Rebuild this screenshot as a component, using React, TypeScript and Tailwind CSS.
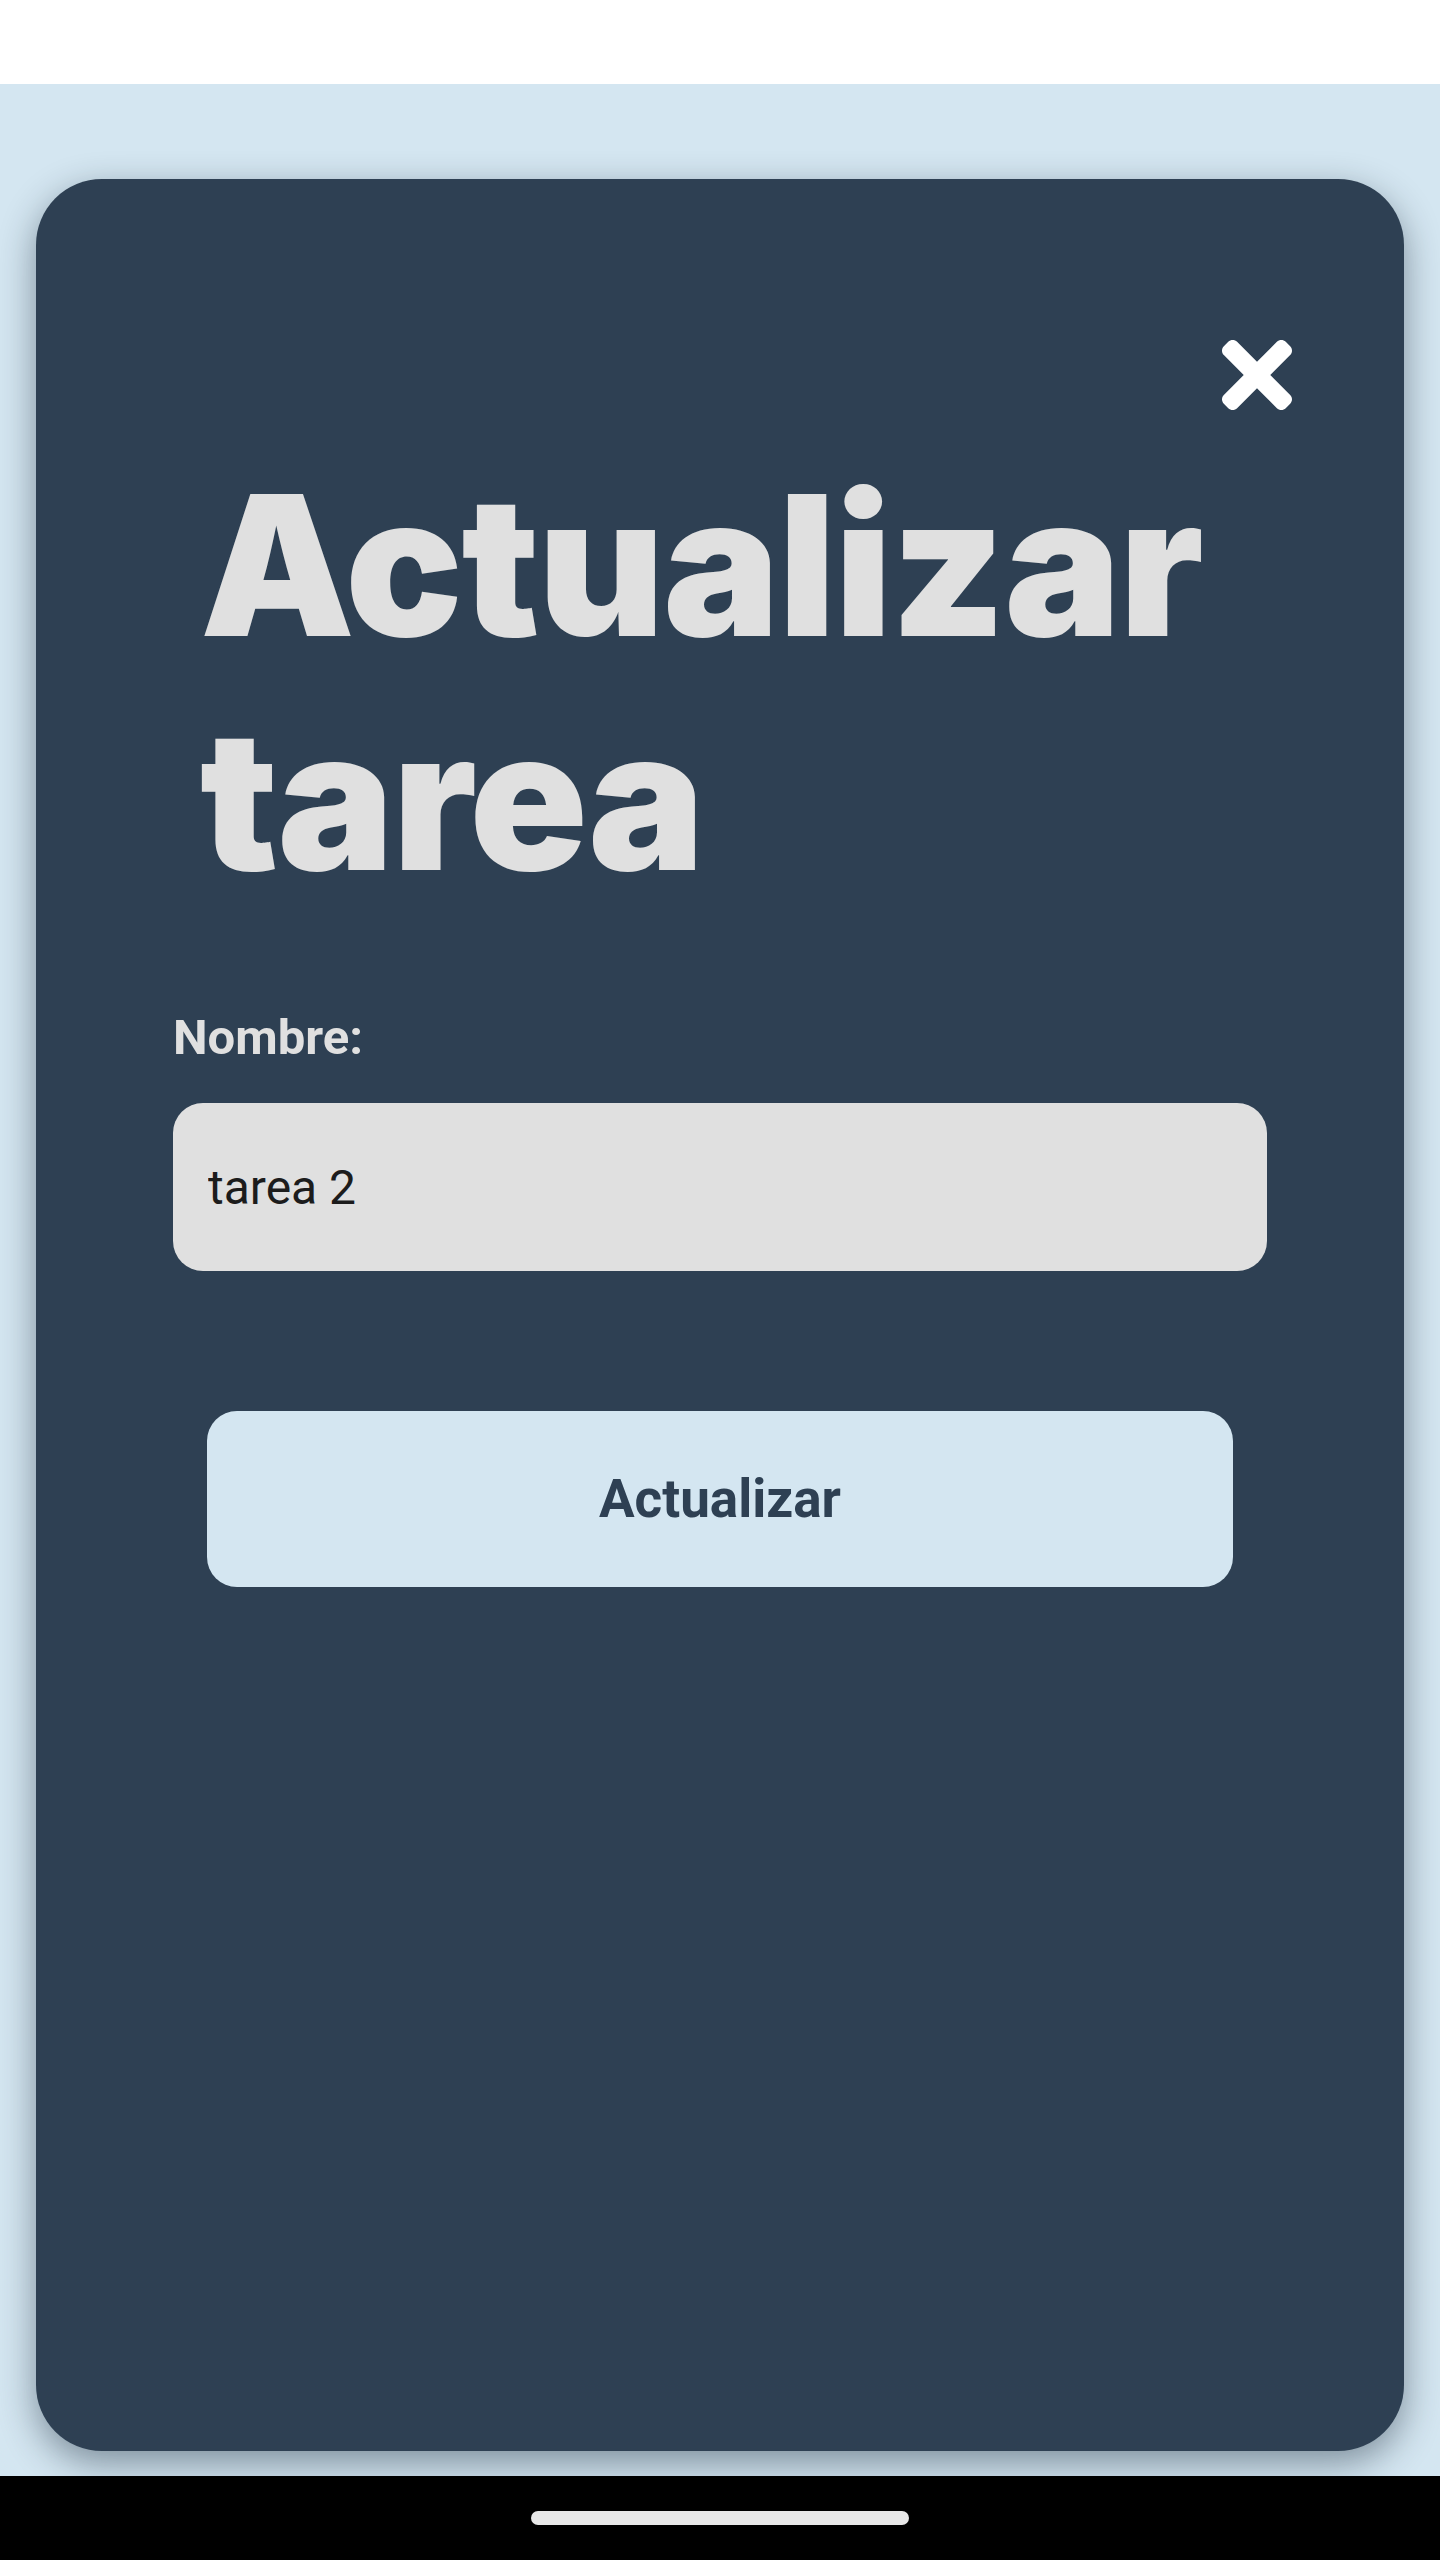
import React, { useState } from 'react';

function CloseIcon() {
  return (
    <svg viewBox="0 80 352 352" className="h-[70px] w-[70px]" fill="#ffffff">
      <path d="M242.72 256l100.07-100.07c12.28-12.28 12.28-32.19 0-44.48l-22.24-22.24c-12.28-12.28-32.19-12.28-44.48 0L176 189.28 75.930 89.21c-12.28-12.28-32.19-12.28-44.48 0L9.21 111.45c-12.28 12.28-12.28 32.19 0 44.48L109.28 256 9.21 356.07c-12.28 12.28-12.28 32.19 0 44.48l22.24 22.24c12.28 12.28 32.2 12.28 44.48 0L176 322.72l100.07 100.07c12.28 12.28 32.2 12.28 44.48 0l22.24-22.24c12.28-12.28 12.28-32.19 0-44.48L242.72 256z" />
    </svg>
  );
}

export default function App() {
  const [nombre, setNombre] = useState('tarea 2');

  return (
    <div className="flex h-[2560px] w-[1440px] flex-col overflow-hidden">
      {/* Status bar */}
      <div className="h-[84px] bg-white" />

      {/* Modal area */}
      <div className="flex-1 bg-[#d4e6f1] px-[36px] pt-[95px] pb-[25px]">
        <div className="flex h-full flex-col rounded-[66px] bg-[#2e4053] shadow-[0_12px_36px_rgba(20,35,50,0.45)]">
          {/* Close */}
          <div className="flex justify-end pt-[161px] pr-[112px]">
            <button className="block">
              <CloseIcon />
            </button>
          </div>

          {/* Title */}
          <h1 className="mt-[38px] pl-[164px] font-['Inter',sans-serif] text-[195px] leading-[234px] font-black tracking-[-1.4px] text-[#e0e0e0]">
            Actualizar
            <br />
            tarea
          </h1>

          {/* Form */}
          <div className="mt-[93px] px-[137px]">
            <label className="block font-['Roboto',sans-serif] text-[49px] leading-[57px] font-bold text-[#e0e0e0]">
              Nombre:
            </label>
            <input
              value={nombre}
              onChange={(e) => setNombre(e.target.value)}
              className="mt-[37px] block h-[168px] w-full rounded-[30px] bg-[#e0e0e0] px-[35px] font-['Roboto',sans-serif] text-[48px] text-[#1c1c1c] outline-none"
            />
            <div className="mt-[140px] px-[34px]">
              <button className="flex h-[176px] w-full items-center justify-center rounded-[30px] bg-[#d4e6f1] pt-[2px] font-['Roboto',sans-serif] text-[53px] font-bold text-[#2e4053]">
                Actualizar
              </button>
            </div>
          </div>
        </div>
      </div>

      {/* Navigation bar */}
      <div className="flex h-[84px] items-center justify-center bg-black">
        <div className="h-[14px] w-[378px] rounded-full bg-[#e8e8e8]" />
      </div>
    </div>
  );
}
